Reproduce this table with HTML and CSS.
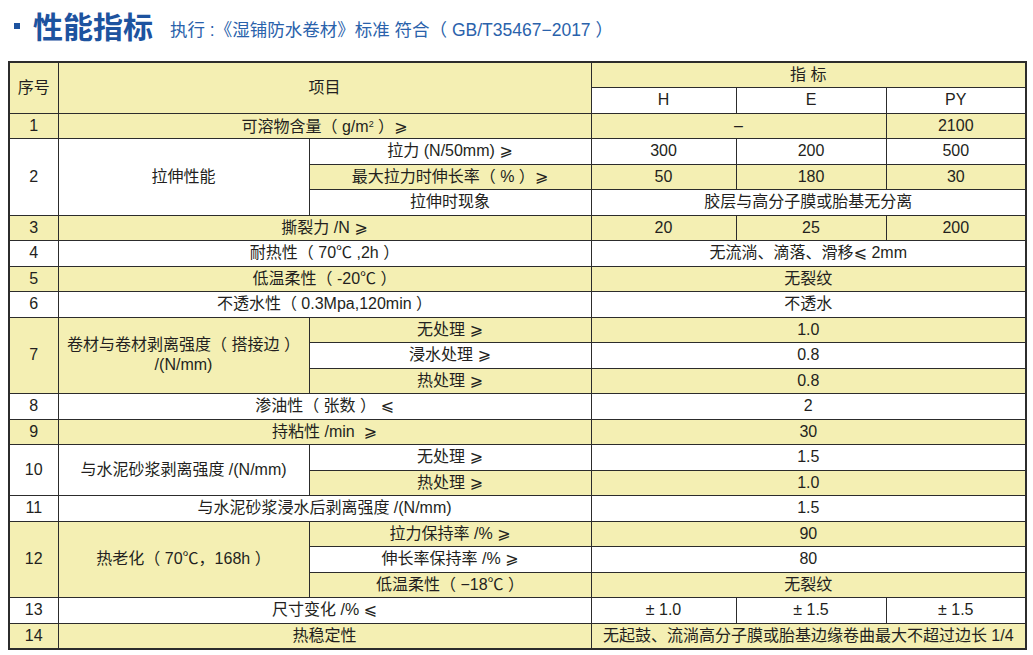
FILE: index.html
```html
<!DOCTYPE html>
<html lang="zh">
<head>
<meta charset="utf-8">
<link rel="stylesheet" href="styles.css">
</head>
<body>
<div class="page">
  <div class="heading">
    <span class="bullet"></span>
    <h1 class="title">性能指标</h1>
    <span class="subtitle">执行 :《湿铺防水卷材》标准 符合（ GB/T35467−2017 ）</span>
  </div>
  <table class="spec">
    <colgroup>
      <col class="c-no"><col class="c-item"><col class="c-sub"><col class="c-h"><col class="c-e"><col class="c-py">
    </colgroup>
    <tr class="y">
      <td rowspan="2">序号</td>
      <td rowspan="2" colspan="2">项目</td>
      <td colspan="3">指 标</td>
    </tr>
    <tr class="w"><td>H</td><td>E</td><td>PY</td></tr>
    <tr class="y"><td>1</td><td colspan="2">可溶物含量（ g/m<span class="sup">2</span> ）<span class="ge">⩾</span></td><td colspan="2">–</td><td>2100</td></tr>
    <tr class="w"><td rowspan="3" class="w">2</td><td rowspan="3" class="w">拉伸性能</td><td>拉力 (N/50mm) <span class="ge">⩾</span></td><td>300</td><td>200</td><td>500</td></tr>
    <tr class="y"><td>最大拉力时伸长率（ % ）<span class="ge">⩾</span></td><td>50</td><td>180</td><td>30</td></tr>
    <tr class="w"><td>拉伸时现象</td><td colspan="3">胶层与高分子膜或胎基无分离</td></tr>
    <tr class="y"><td>3</td><td colspan="2">撕裂力 /N <span class="ge">⩾</span></td><td>20</td><td>25</td><td>200</td></tr>
    <tr class="w"><td>4</td><td colspan="2">耐热性（ 70℃ ,2h ）</td><td colspan="3">无流淌、滴落、滑移<span class="ge">⩽</span> 2mm</td></tr>
    <tr class="y"><td>5</td><td colspan="2">低温柔性（ -20℃ ）</td><td colspan="3">无裂纹</td></tr>
    <tr class="w"><td>6</td><td colspan="2">不透水性（ 0.3Mpa,120min ）</td><td colspan="3">不透水</td></tr>
    <tr class="y"><td rowspan="3" class="y">7</td><td rowspan="3" class="y">卷材与卷材剥离强度（ 搭接边 ）<br>/(N/mm)</td><td>无处理 <span class="ge">⩾</span></td><td colspan="3">1.0</td></tr>
    <tr class="w"><td>浸水处理 <span class="ge">⩾</span></td><td colspan="3">0.8</td></tr>
    <tr class="y"><td>热处理 <span class="ge">⩾</span></td><td colspan="3">0.8</td></tr>
    <tr class="w"><td>8</td><td colspan="2">渗油性（ 张数 ） <span class="ge">⩽</span></td><td colspan="3">2</td></tr>
    <tr class="y"><td>9</td><td colspan="2">持粘性 /min &nbsp;<span class="ge">⩾</span></td><td colspan="3">30</td></tr>
    <tr class="w"><td rowspan="2" class="w">10</td><td rowspan="2" class="w">与水泥砂浆剥离强度 /(N/mm)</td><td>无处理 <span class="ge">⩾</span></td><td colspan="3">1.5</td></tr>
    <tr class="y"><td>热处理 <span class="ge">⩾</span></td><td colspan="3">1.0</td></tr>
    <tr class="w"><td>11</td><td colspan="2">与水泥砂浆浸水后剥离强度 /(N/mm)</td><td colspan="3">1.5</td></tr>
    <tr class="y"><td rowspan="3" class="y">12</td><td rowspan="3" class="y">热老化（ 70℃，168h ）</td><td>拉力保持率 /% <span class="ge">⩾</span></td><td colspan="3">90</td></tr>
    <tr class="w"><td>伸长率保持率 /% <span class="ge">⩾</span></td><td colspan="3">80</td></tr>
    <tr class="y"><td>低温柔性（ −18℃ ）</td><td colspan="3">无裂纹</td></tr>
    <tr class="w"><td>13</td><td colspan="2">尺寸变化 /% <span class="ge">⩽</span></td><td>± 1.0</td><td>± 1.5</td><td>± 1.5</td></tr>
    <tr class="y"><td>14</td><td colspan="2">热稳定性</td><td colspan="3">无起鼓、流淌高分子膜或胎基边缘卷曲最大不超过边长 1/4</td></tr>
  </table>
</div>
</body>
</html>
```
FILE: styles.css
```css
* { box-sizing: border-box; }
html, body { margin: 0; padding: 0; background: #ffffff; }
body {
  font-family: "Liberation Sans", "Noto Sans CJK SC", sans-serif;
  color: #231f20;
}
.page {
  width: 1033px;
  height: 655px;
  padding: 0 0 0 8px;
  overflow: hidden;
}
.heading {
  display: flex;
  align-items: flex-start;
  height: 61px;
  padding: 9px 0 0 6px;
  color: #1d539f;
}
.bullet {
  width: 6px;
  height: 6px;
  background: #1d539f;
  margin: 14px 13px 0 0;
}
.title {
  margin: 0 17px 0 0;
  font-family: "Noto Sans CJK SC", sans-serif;
  font-size: 30px;
  line-height: 32px;
  font-weight: 700;
}
.subtitle {
  font-size: 17.5px;
  line-height: 20px;
  margin-top: 11px;
  color: #2a62ab;
  font-family: "Liberation Sans", "Noto Sans CJK SC", sans-serif;
}
.spec {
  border-collapse: collapse;
  table-layout: fixed;
  width: 1017px;
  border: 2px solid #2c2c2c;
  font-size: 16px;
}
.c-no { width: 49px; }
.c-item { width: 251px; }
.c-sub { width: 282px; }
.c-h { width: 145px; }
.c-e { width: 150px; }
.c-py { width: 140px; }
.spec td {
  border: 1px solid #2c2c2c;
  text-align: center;
  vertical-align: middle;
  padding: 0 4px;
  line-height: 20px;
  white-space: nowrap;
}
.spec tr { height: 25.5px; }
tr.y, td.y { background: #f4efb3; }
tr.w, td.w { background: #ffffff; }
.sup { font-size: 9px; vertical-align: 5px; }
.ge { font-family: "DejaVu Sans", sans-serif; font-size: 16px; line-height: 1; }
```
